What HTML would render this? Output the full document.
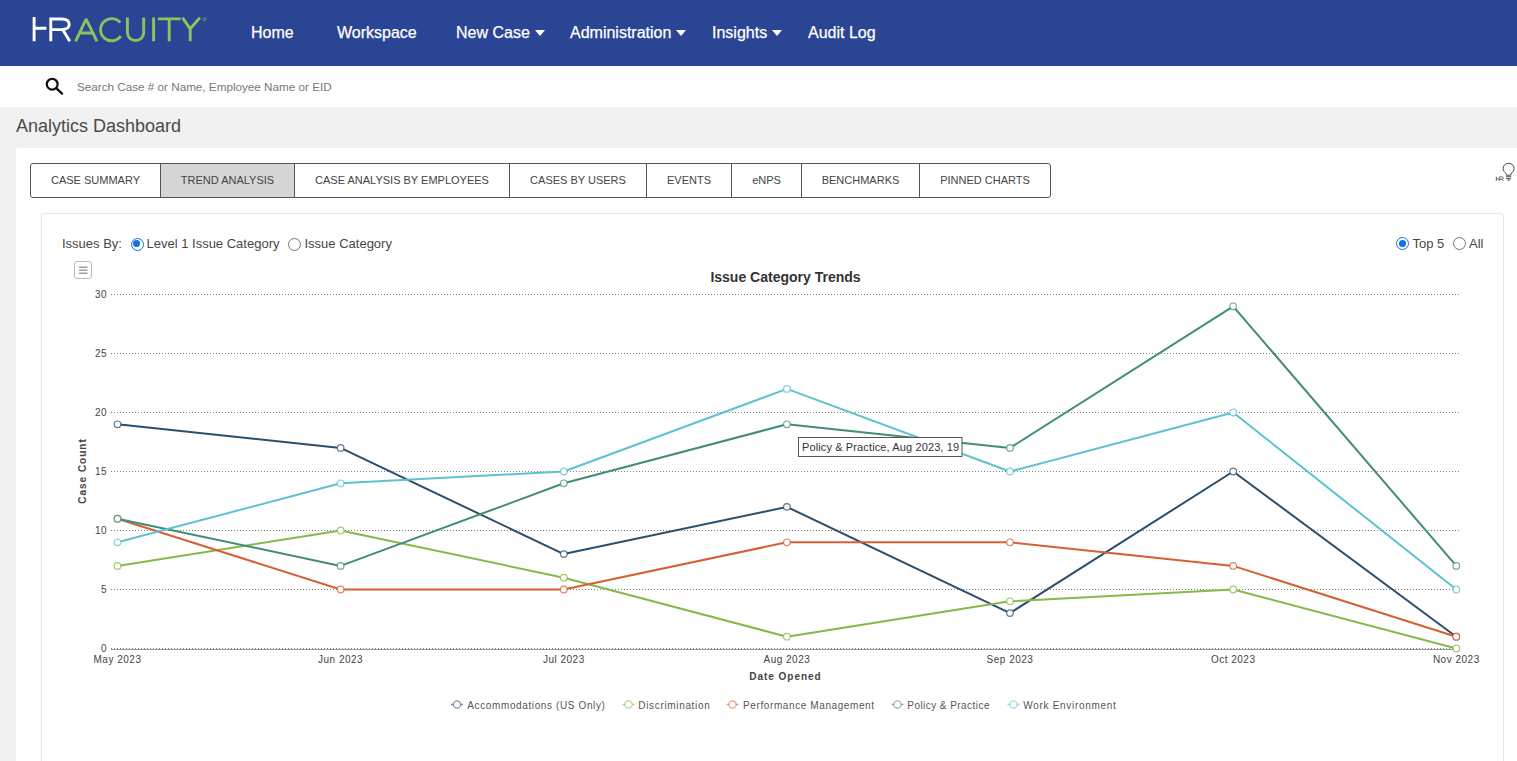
<!DOCTYPE html>
<html><head><meta charset="utf-8"><title>Analytics Dashboard</title>
<style>
html,body{margin:0;padding:0;}
body{width:1517px;height:761px;overflow:hidden;position:relative;background:#f1f1f1;font-family:"Liberation Sans",sans-serif;}
.hdr{position:absolute;left:0;top:0;width:1517px;height:66px;background:#2a4593;}
.nav{position:absolute;top:23px;color:#fff;font-size:16px;line-height:20px;white-space:nowrap;-webkit-text-stroke:0.25px #fff;}
.caret{display:inline-block;width:0;height:0;border-left:5px solid transparent;border-right:5px solid transparent;border-top:6px solid #fff;vertical-align:middle;margin-left:5px;position:relative;top:-1px;}
.srch{position:absolute;left:0;top:66px;width:1517px;height:41px;background:#fff;}
.ph{position:absolute;left:77px;top:80px;font-size:11.7px;line-height:14px;color:#777;white-space:nowrap;}
.ttl{position:absolute;left:16px;top:116px;font-size:18px;line-height:20px;color:#4a4a4a;white-space:nowrap;}
.card{position:absolute;left:16px;top:148px;width:1540px;height:700px;background:#fff;border-radius:3px;}
.tabs{position:absolute;left:30px;top:163px;height:35px;display:flex;border:1px solid #555;border-radius:3px;box-sizing:border-box;overflow:hidden;}
.tab{height:33px;line-height:33px;font-size:11px;color:#444;text-align:center;box-sizing:border-box;border-left:1px solid #555;white-space:nowrap;}
.tab:first-child{border-left:none;}
.tab.on{background:#d6d6d6;}
.inner{position:absolute;left:41px;top:213px;width:1463px;height:600px;border:1px solid #e6e6e6;border-radius:3px;box-sizing:border-box;background:#fff;}
.lbl{position:absolute;font-size:13px;line-height:15px;color:#474747;white-space:nowrap;}
.rad{position:absolute;width:13px;height:13px;box-sizing:border-box;border-radius:50%;border:1px solid #767676;background:#fff;}
.rad.on{border:1.4px solid #1a6fe0;}
.rad.on:after{content:"";position:absolute;left:1.6px;top:1.6px;width:7px;height:7px;border-radius:50%;background:#1a6fe0;}
svg text{font-family:"Liberation Sans",sans-serif;}
.ax{font-size:10px;letter-spacing:0.5px;fill:#444;}
.axt{font-size:10px;letter-spacing:1px;font-weight:bold;fill:#444;}
.title{font-size:14px;font-weight:bold;fill:#333;}
.tip{font-size:11px;letter-spacing:0.13px;fill:#333;}
.leg{font-size:10px;letter-spacing:0.65px;fill:#555;}
</style></head>
<body>
<div class="hdr"></div>
<svg style="position:absolute;left:0;top:0" width="230" height="66" viewBox="0 0 230 66">
  <g fill="none" stroke-width="2.9" stroke-linecap="butt" stroke-linejoin="miter">
    <path d="M34.1 17 V41.3 M34.1 28.3 H46.4" stroke="#fff"/>
    <path d="M50.8 41.3 V19 H61.5 C66.5 19 69.2 20.8 69.2 24.3 C69.2 27.8 66.5 29.6 61.5 29.6 H50.8 M62.8 29.8 L69.8 41.3" stroke="#fff"/>
    <path d="M75.6 41.3 L86.1 19.2 L97 41.3 M79.5 33 H93" stroke="#8bc35f" stroke-linejoin="bevel"/>
    <path d="M120.3 22.7 A11.1 11.1 0 1 0 120.7 36.2" stroke="#8bc35f"/>
    <path d="M127.4 17.4 V32.4 A8.15 8.15 0 0 0 143.7 32.4 V17.4" stroke="#8bc35f"/>
    <path d="M153.6 17.4 V41.2 M157.9 18.9 H180.6 M169.2 18.9 V41.2 M182.5 17.6 L190.2 28.8 L199.9 17.6 M190.2 28.8 V41.2" stroke="#8bc35f"/>
  </g>
  <circle cx="204.6" cy="19.3" r="1.5" fill="none" stroke="#8bc35f" stroke-width="0.6"/>
</svg>
<div class="nav" style="left:251px">Home</div>
<div class="nav" style="left:337px">Workspace</div>
<div class="nav" style="left:456px">New Case<span class="caret"></span></div>
<div class="nav" style="left:570px">Administration<span class="caret"></span></div>
<div class="nav" style="left:712px">Insights<span class="caret"></span></div>
<div class="nav" style="left:808px">Audit Log</div>
<div class="srch"></div>
<svg style="position:absolute;left:44px;top:76px" width="22" height="20" viewBox="0 0 22 20">
  <circle cx="8.2" cy="8.2" r="5.4" fill="none" stroke="#111" stroke-width="2.2"/>
  <path d="M12.2 12.2 L18 17.6" stroke="#111" stroke-width="2.4" stroke-linecap="round"/>
</svg>
<div class="ph">Search Case # or Name, Employee Name or EID</div>
<div class="ttl">Analytics Dashboard</div>
<div class="card"></div>
<div class="tabs">
  <div class="tab" style="width:129px">CASE SUMMARY</div>
  <div class="tab on" style="width:134px">TREND ANALYSIS</div>
  <div class="tab" style="width:215px">CASE ANALYSIS BY EMPLOYEES</div>
  <div class="tab" style="width:137px">CASES BY USERS</div>
  <div class="tab" style="width:85px">EVENTS</div>
  <div class="tab" style="width:70px">eNPS</div>
  <div class="tab" style="width:118px">BENCHMARKS</div>
  <div class="tab" style="width:131px">PINNED CHARTS</div>
</div>
<svg style="position:absolute;left:1490px;top:158px" width="27" height="26" viewBox="0 0 27 26">
  <path d="M16.3 17.2 V15.8 C14.6 14.3 13.1 12.6 13.1 10.3 C13.1 7.3 15.5 5.4 18.6 5.4 C21.7 5.4 24.1 7.3 24.1 10.3 C24.1 12.6 22.6 14.3 20.9 15.8 V17.2 Z" fill="none" stroke="#444" stroke-width="1"/>
  <path d="M16 18.7 H21.2 M16 20.4 H21.2" stroke="#444" stroke-width="0.9" fill="none"/>
  <path d="M16.6 21.6 L18.6 22.9 L20.6 21.6 Z" fill="#444"/>
  <path d="M6.3 18.6 V23 M6.3 20.8 H8.7 M9.3 23 V18.9 H11.7 C12.9 18.9 13.4 19.5 13.4 20.1 C13.4 20.8 12.9 21.3 11.7 21.3 H9.3 M11.6 21.3 L13.5 23" stroke="#555" stroke-width="0.9" fill="none"/>
</svg>
<div class="inner"></div>
<div class="lbl" style="left:62px;top:236px">Issues By:</div>
<div class="rad on" style="left:130.5px;top:237.5px"></div>
<div class="lbl" style="left:146.5px;top:236px">Level 1 Issue Category</div>
<div class="rad" style="left:288px;top:237.5px"></div>
<div class="lbl" style="left:304.5px;top:236px">Issue Category</div>
<div class="rad on" style="left:1396px;top:237px"></div>
<div class="lbl" style="left:1412.5px;top:236px">Top 5</div>
<div class="rad" style="left:1453px;top:237px"></div>
<div class="lbl" style="left:1469px;top:236px">All</div>
<svg style="position:absolute;left:73px;top:260px" width="20" height="20" viewBox="0 0 20 20">
  <rect x="1.5" y="1.5" width="17" height="17" rx="2.5" fill="#fff" stroke="#bbb" stroke-width="1"/>
  <path d="M5.9 7.3 H14.4 M5.9 10.3 H14.4 M5.9 13.3 H14.4" stroke="#a0a0a0" stroke-width="1.6"/>
</svg>
<svg style="position:absolute;left:0;top:0" width="1517" height="761" viewBox="0 0 1517 761">
<line x1="111" y1="648.5" x2="1459" y2="648.5" stroke="#808080" stroke-width="1" stroke-dasharray="1 2"/>
<text x="107" y="652.0" text-anchor="end" class="ax">0</text>
<line x1="111" y1="589.5" x2="1459" y2="589.5" stroke="#808080" stroke-width="1" stroke-dasharray="1 2"/>
<text x="107" y="593.0" text-anchor="end" class="ax">5</text>
<line x1="111" y1="530.5" x2="1459" y2="530.5" stroke="#808080" stroke-width="1" stroke-dasharray="1 2"/>
<text x="107" y="534.0" text-anchor="end" class="ax">10</text>
<line x1="111" y1="471.5" x2="1459" y2="471.5" stroke="#808080" stroke-width="1" stroke-dasharray="1 2"/>
<text x="107" y="475.0" text-anchor="end" class="ax">15</text>
<line x1="111" y1="412.5" x2="1459" y2="412.5" stroke="#808080" stroke-width="1" stroke-dasharray="1 2"/>
<text x="107" y="416.0" text-anchor="end" class="ax">20</text>
<line x1="111" y1="353.5" x2="1459" y2="353.5" stroke="#808080" stroke-width="1" stroke-dasharray="1 2"/>
<text x="107" y="357.0" text-anchor="end" class="ax">25</text>
<line x1="111" y1="294.5" x2="1459" y2="294.5" stroke="#808080" stroke-width="1" stroke-dasharray="1 2"/>
<text x="107" y="298.0" text-anchor="end" class="ax">30</text>
<line x1="111" y1="649.5" x2="1459" y2="649.5" stroke="#999" stroke-width="1"/>
<text x="117.5" y="663" text-anchor="middle" class="ax">May 2023</text>
<text x="340.6" y="663" text-anchor="middle" class="ax">Jun 2023</text>
<text x="563.8" y="663" text-anchor="middle" class="ax">Jul 2023</text>
<text x="786.9" y="663" text-anchor="middle" class="ax">Aug 2023</text>
<text x="1010.0" y="663" text-anchor="middle" class="ax">Sep 2023</text>
<text x="1233.2" y="663" text-anchor="middle" class="ax">Oct 2023</text>
<text x="1456.3" y="663" text-anchor="middle" class="ax">Nov 2023</text>
<text x="749.2" y="679.5" class="axt" textLength="72.5" lengthAdjust="spacing">Date Opened</text>
<text transform="translate(86,471) rotate(-90)" text-anchor="middle" class="axt">Case Count</text>
<text x="785.5" y="281.5" text-anchor="middle" class="title">Issue Category Trends</text>
<polyline points="117.5,424.3 340.6,447.9 563.8,554.1 786.9,506.9 1010.0,613.1 1233.2,471.5 1456.3,636.7" fill="none" stroke="#294f6d" stroke-width="2" stroke-linejoin="round"/>
<circle cx="117.5" cy="424.3" r="3.3" fill="#fff" stroke="#294f6d" stroke-width="1.2" stroke-opacity="0.75"/>
<circle cx="340.6" cy="447.9" r="3.3" fill="#fff" stroke="#294f6d" stroke-width="1.2" stroke-opacity="0.75"/>
<circle cx="563.8" cy="554.1" r="3.3" fill="#fff" stroke="#294f6d" stroke-width="1.2" stroke-opacity="0.75"/>
<circle cx="786.9" cy="506.9" r="3.3" fill="#fff" stroke="#294f6d" stroke-width="1.2" stroke-opacity="0.75"/>
<circle cx="1010.0" cy="613.1" r="3.3" fill="#fff" stroke="#294f6d" stroke-width="1.2" stroke-opacity="0.75"/>
<circle cx="1233.2" cy="471.5" r="3.3" fill="#fff" stroke="#294f6d" stroke-width="1.2" stroke-opacity="0.75"/>
<circle cx="1456.3" cy="636.7" r="3.3" fill="#fff" stroke="#294f6d" stroke-width="1.2" stroke-opacity="0.75"/>
<polyline points="117.5,565.9 340.6,530.5 563.8,577.7 786.9,636.7 1010.0,601.3 1233.2,589.5 1456.3,648.5" fill="none" stroke="#86b84a" stroke-width="2" stroke-linejoin="round"/>
<circle cx="117.5" cy="565.9" r="3.3" fill="#fff" stroke="#86b84a" stroke-width="1.2" stroke-opacity="0.75"/>
<circle cx="340.6" cy="530.5" r="3.3" fill="#fff" stroke="#86b84a" stroke-width="1.2" stroke-opacity="0.75"/>
<circle cx="563.8" cy="577.7" r="3.3" fill="#fff" stroke="#86b84a" stroke-width="1.2" stroke-opacity="0.75"/>
<circle cx="786.9" cy="636.7" r="3.3" fill="#fff" stroke="#86b84a" stroke-width="1.2" stroke-opacity="0.75"/>
<circle cx="1010.0" cy="601.3" r="3.3" fill="#fff" stroke="#86b84a" stroke-width="1.2" stroke-opacity="0.75"/>
<circle cx="1233.2" cy="589.5" r="3.3" fill="#fff" stroke="#86b84a" stroke-width="1.2" stroke-opacity="0.75"/>
<circle cx="1456.3" cy="648.5" r="3.3" fill="#fff" stroke="#86b84a" stroke-width="1.2" stroke-opacity="0.75"/>
<polyline points="117.5,518.7 340.6,589.5 563.8,589.5 786.9,542.3 1010.0,542.3 1233.2,565.9 1456.3,636.7" fill="none" stroke="#d65f35" stroke-width="2" stroke-linejoin="round"/>
<circle cx="117.5" cy="518.7" r="3.3" fill="#fff" stroke="#d65f35" stroke-width="1.2" stroke-opacity="0.75"/>
<circle cx="340.6" cy="589.5" r="3.3" fill="#fff" stroke="#d65f35" stroke-width="1.2" stroke-opacity="0.75"/>
<circle cx="563.8" cy="589.5" r="3.3" fill="#fff" stroke="#d65f35" stroke-width="1.2" stroke-opacity="0.75"/>
<circle cx="786.9" cy="542.3" r="3.3" fill="#fff" stroke="#d65f35" stroke-width="1.2" stroke-opacity="0.75"/>
<circle cx="1010.0" cy="542.3" r="3.3" fill="#fff" stroke="#d65f35" stroke-width="1.2" stroke-opacity="0.75"/>
<circle cx="1233.2" cy="565.9" r="3.3" fill="#fff" stroke="#d65f35" stroke-width="1.2" stroke-opacity="0.75"/>
<circle cx="1456.3" cy="636.7" r="3.3" fill="#fff" stroke="#d65f35" stroke-width="1.2" stroke-opacity="0.75"/>
<polyline points="117.5,518.7 340.6,565.9 563.8,483.3 786.9,424.3 1010.0,447.9 1233.2,306.3 1456.3,565.9" fill="none" stroke="#428d73" stroke-width="2" stroke-linejoin="round"/>
<circle cx="117.5" cy="518.7" r="3.3" fill="#fff" stroke="#428d73" stroke-width="1.2" stroke-opacity="0.75"/>
<circle cx="340.6" cy="565.9" r="3.3" fill="#fff" stroke="#428d73" stroke-width="1.2" stroke-opacity="0.75"/>
<circle cx="563.8" cy="483.3" r="3.3" fill="#fff" stroke="#428d73" stroke-width="1.2" stroke-opacity="0.75"/>
<circle cx="786.9" cy="424.3" r="3.3" fill="#fff" stroke="#428d73" stroke-width="1.2" stroke-opacity="0.75"/>
<circle cx="1010.0" cy="447.9" r="3.3" fill="#fff" stroke="#428d73" stroke-width="1.2" stroke-opacity="0.75"/>
<circle cx="1233.2" cy="306.3" r="3.3" fill="#fff" stroke="#428d73" stroke-width="1.2" stroke-opacity="0.75"/>
<circle cx="1456.3" cy="565.9" r="3.3" fill="#fff" stroke="#428d73" stroke-width="1.2" stroke-opacity="0.75"/>
<polyline points="117.5,542.3 340.6,483.3 563.8,471.5 786.9,388.9 1010.0,471.5 1233.2,412.5 1456.3,589.5" fill="none" stroke="#5cc2cf" stroke-width="2" stroke-linejoin="round"/>
<circle cx="117.5" cy="542.3" r="3.3" fill="#fff" stroke="#5cc2cf" stroke-width="1.2" stroke-opacity="0.75"/>
<circle cx="340.6" cy="483.3" r="3.3" fill="#fff" stroke="#5cc2cf" stroke-width="1.2" stroke-opacity="0.75"/>
<circle cx="563.8" cy="471.5" r="3.3" fill="#fff" stroke="#5cc2cf" stroke-width="1.2" stroke-opacity="0.75"/>
<circle cx="786.9" cy="388.9" r="3.3" fill="#fff" stroke="#5cc2cf" stroke-width="1.2" stroke-opacity="0.75"/>
<circle cx="1010.0" cy="471.5" r="3.3" fill="#fff" stroke="#5cc2cf" stroke-width="1.2" stroke-opacity="0.75"/>
<circle cx="1233.2" cy="412.5" r="3.3" fill="#fff" stroke="#5cc2cf" stroke-width="1.2" stroke-opacity="0.75"/>
<circle cx="1456.3" cy="589.5" r="3.3" fill="#fff" stroke="#5cc2cf" stroke-width="1.2" stroke-opacity="0.75"/>
<rect x="798.5" y="437.5" width="163.5" height="19" fill="#fff" stroke="#555" stroke-width="1"/>
<text x="802" y="451" class="tip" textLength="157.2" lengthAdjust="spacing">Policy &amp; Practice, Aug 2023, 19</text>
<line x1="451" y1="704.5" x2="463" y2="704.5" stroke="#294f6d" stroke-width="1.5" stroke-opacity="0.6"/>
<circle cx="457" cy="704.5" r="3.6" fill="#fff" stroke="#294f6d" stroke-width="1.2" stroke-opacity="0.6"/>
<text x="467.3" y="708.5" class="leg" textLength="138.2" lengthAdjust="spacing">Accommodations (US Only)</text>
<line x1="622.5" y1="704.5" x2="634.5" y2="704.5" stroke="#86b84a" stroke-width="1.5" stroke-opacity="0.6"/>
<circle cx="628.5" cy="704.5" r="3.6" fill="#fff" stroke="#86b84a" stroke-width="1.2" stroke-opacity="0.6"/>
<text x="638.3" y="708.5" class="leg" textLength="72.1" lengthAdjust="spacing">Discrimination</text>
<line x1="726.5" y1="704.5" x2="738.5" y2="704.5" stroke="#d65f35" stroke-width="1.5" stroke-opacity="0.6"/>
<circle cx="732.5" cy="704.5" r="3.6" fill="#fff" stroke="#d65f35" stroke-width="1.2" stroke-opacity="0.6"/>
<text x="743.1" y="708.5" class="leg" textLength="131.6" lengthAdjust="spacing">Performance Management</text>
<line x1="891.5" y1="704.5" x2="903.5" y2="704.5" stroke="#428d73" stroke-width="1.5" stroke-opacity="0.6"/>
<circle cx="897.5" cy="704.5" r="3.6" fill="#fff" stroke="#428d73" stroke-width="1.2" stroke-opacity="0.6"/>
<text x="907.3" y="708.5" class="leg" textLength="82.8" lengthAdjust="spacing">Policy &amp; Practice</text>
<line x1="1007.5" y1="704.5" x2="1019.5" y2="704.5" stroke="#5cc2cf" stroke-width="1.5" stroke-opacity="0.6"/>
<circle cx="1013.5" cy="704.5" r="3.6" fill="#fff" stroke="#5cc2cf" stroke-width="1.2" stroke-opacity="0.6"/>
<text x="1023.2" y="708.5" class="leg" textLength="93.3" lengthAdjust="spacing">Work Environment</text>
</svg>
</body></html>
